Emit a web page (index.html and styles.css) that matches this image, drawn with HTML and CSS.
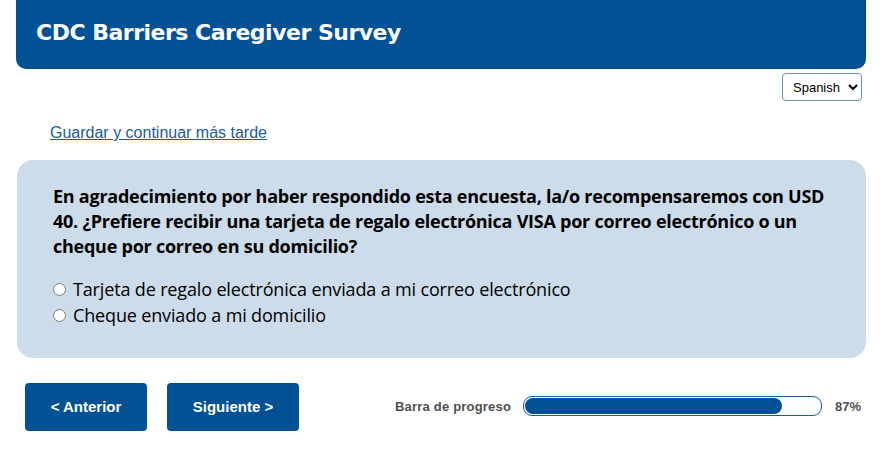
FILE: index.html
```html
<!DOCTYPE html>
<html lang="es">
<head>
<meta charset="utf-8">
<title>CDC Barriers Caregiver Survey</title>
<link rel="stylesheet" href="styles.css">
</head>
<body>
<div class="page">
  <header class="header">
    <h1 class="title">CDC Barriers Caregiver Survey</h1>
  </header>
  <div class="lang-row">
    <select class="lang-select">
      <option>Spanish</option>
    </select>
  </div>
  <div class="save-row">
    <a class="save-link" href="#">Guardar y continuar más tarde</a>
  </div>
  <section class="panel">
    <p class="question">En agradecimiento por haber respondido esta encuesta, la/o recompensaremos con USD 40. ¿Prefiere recibir una tarjeta de regalo electrónica VISA por correo electrónico o un cheque por correo en su domicilio?</p>
    <div class="options">
      <label class="option"><input type="radio" name="pay" class="radio"><span>Tarjeta de regalo electrónica enviada a mi correo electrónico</span></label>
      <label class="option"><input type="radio" name="pay" class="radio"><span>Cheque enviado a mi domicilio</span></label>
    </div>
  </section>
  <div class="nav-row">
    <button class="btn btn-prev">&lt; Anterior</button>
    <button class="btn btn-next">Siguiente &gt;</button>
    <div class="progress">
      <span class="progress-label">Barra de progreso</span>
      <div class="progress-track"><div class="progress-fill" style="width: 87%"></div></div>
      <span class="progress-pct">87%</span>
    </div>
  </div>
</div>
</body>
</html>
```

FILE: styles.css
```css
html, body {
  margin: 0;
  padding: 0;
  background: #ffffff;
}

.page {
  width: 850px;
  margin-left: 16px;
  font-family: "Liberation Sans", Arial, sans-serif;
}

.header {
  height: 69px;
  background: #025195;
  border-radius: 0 0 10px 10px;
  display: flex;
  align-items: center;
  padding-left: 20px;
  padding-bottom: 4px;
  box-sizing: border-box;
}

.title {
  margin: 0;
  color: #ffffff;
  font-family: "DejaVu Sans", Verdana, sans-serif;
  font-weight: bold;
  font-size: 22px;
  letter-spacing: -0.5px;
}

.lang-row {
  display: flex;
  justify-content: flex-end;
  padding-top: 4px;
  padding-right: 4px;
}

.lang-select {
  width: 80px;
  height: 28px;
  border: 1px solid #6e8fbf;
  border-radius: 4px;
  background: #ffffff;
  font-family: "Liberation Sans", Arial, sans-serif;
  font-size: 13px;
  color: #000;
  padding: 0 2px 0 6px;
}

.save-row {
  padding: 23px 0 0 34px;
  height: 36px;
}

.save-link {
  color: #1b5a9c;
  font-size: 16px;
  text-decoration: underline;
}

.panel {
  background: #cddcea;
  border-radius: 16px;
  margin-left: 1px;
  padding: 24px 30px 28px 36px;
  height: 146px;
}

.question {
  margin: 0;
  font-family: "Open Sans", "Noto Sans", sans-serif;
  font-weight: bold;
  font-size: 18px;
  line-height: 25px;
  color: #000;
  letter-spacing: -0.25px;
}

.options {
  margin-top: 17px;
  display: flex;
  flex-direction: column;
}

.option {
  display: flex;
  align-items: center;
  height: 26px;
  font-family: "Open Sans", "Noto Sans", sans-serif;
  font-size: 18px;
  color: #000;
  letter-spacing: -0.15px;
}

.radio {
  margin: 0 7px 0 0;
  width: 13px;
  height: 13px;
}

.nav-row {
  display: flex;
  align-items: center;
  margin-top: 25px;
  padding-left: 9px;
}

.btn {
  height: 48px;
  background: #025195;
  color: #ffffff;
  border: none;
  border-radius: 4px;
  font-family: "Liberation Sans", Arial, sans-serif;
  font-weight: bold;
  font-size: 15px;
  padding: 0 0 2px 0;
  cursor: pointer;
}

.btn-prev {
  width: 122px;
}

.btn-next {
  width: 132px;
  margin-left: 20px;
}

.progress {
  display: flex;
  align-items: center;
  margin-left: 96px;
  margin-top: -2px;
}

.progress-label {
  font-size: 13px;
  color: #4f4f4f;
  font-weight: bold;
  letter-spacing: 0.2px;
}

.progress-track {
  width: 295px;
  height: 16px;
  margin-left: 12px;
  border: 1px solid #1b5a9c;
  border-radius: 9px;
  background: #ffffff;
  padding: 1px;
  box-sizing: content-box;
}

.progress-fill {
  height: 100%;
  background: #025195;
  border-radius: 8px;
}

.progress-pct {
  margin-left: 13px;
  font-size: 13px;
  color: #4f4f4f;
  font-weight: bold;
}
```
